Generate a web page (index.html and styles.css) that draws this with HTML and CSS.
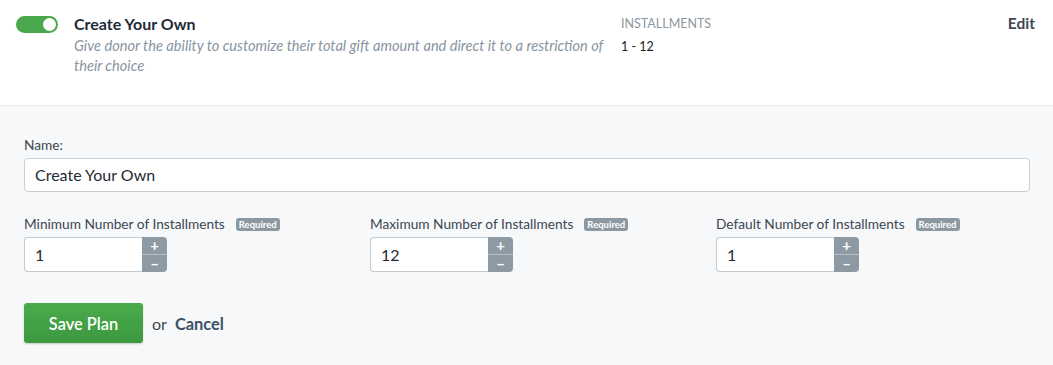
FILE: index.html
```html
<!DOCTYPE html>
<html>
<head>
<meta charset="utf-8">
<link rel="stylesheet" href="styles.css">
</head>
<body>
<div class="plan">
  <div class="summary">
    <div class="toggle"><span class="knob"></span></div>
    <div class="info">
      <div class="title">Create Your Own</div>
      <div class="desc">Give donor the ability to customize their total gift amount and direct it to a restriction of their choice</div>
    </div>
    <div class="meta">
      <div class="meta-label">INSTALLMENTS</div>
      <div class="meta-value">1 - 12</div>
    </div>
    <a class="edit">Edit</a>
  </div>
  <div class="form">
    <label class="lbl">Name:</label>
    <div class="text-input">Create Your Own</div>
    <div class="cols">
      <div class="col">
        <div class="lbl">Minimum Number of Installments <span class="badge">Required</span></div>
        <div class="num">
          <div class="num-field">1</div>
          <div class="spin"><span class="up">+</span><span class="down">–</span></div>
        </div>
      </div>
      <div class="col">
        <div class="lbl">Maximum Number of Installments <span class="badge">Required</span></div>
        <div class="num">
          <div class="num-field">12</div>
          <div class="spin"><span class="up">+</span><span class="down">–</span></div>
        </div>
      </div>
      <div class="col">
        <div class="lbl">Default Number of Installments <span class="badge">Required</span></div>
        <div class="num">
          <div class="num-field">1</div>
          <div class="spin"><span class="up">+</span><span class="down">–</span></div>
        </div>
      </div>
    </div>
    <div class="actions">
      <button class="save">Save Plan</button>
      <span class="or">or</span>
      <a class="cancel">Cancel</a>
    </div>
  </div>
</div>
</body>
</html>
```
FILE: styles.css
```css
* { box-sizing: border-box; }
html, body { margin: 0; padding: 0; background: #f7f8f9; }
body { font-family: Lato, "Open Sans", sans-serif; color: #3b4752; width: 1053px; height: 365px; overflow: hidden; }
.plan { width: 1053px; }
.summary {
  background: #fff;
  height: 106px;
  border-bottom: 1px solid #e7eaec;
  display: flex;
  padding: 15px 18px 0 16px;
}
.toggle {
  width: 42px; height: 17px; border-radius: 9px; background: #4aa84c;
  display: flex; justify-content: flex-end; align-items: center; padding-right: 2px;
  flex: none; margin-top: 1px;
}
.knob { width: 13px; height: 13px; border-radius: 50%; background: #fff; display: block; }
.info { margin-left: 16px; width: 545px; flex: none; }
.title { font-weight: 700; font-size: 16px; color: #1e2b37; line-height: 18px; }
.desc { font-style: italic; font-size: 14.6px; color: #8795a2; line-height: 20px; margin-top: 3px; }
.meta { margin-left: 2px; padding-top: 1px; }
.meta-label { font-size: 12.5px; color: #8c979f; line-height: 16px; }
.meta-value { font-size: 12.5px; color: #1c1c1c; line-height: 16px; margin-top: 7px; }
.edit { margin-left: auto; font-weight: 700; font-size: 15.5px; color: #3c4853; line-height: 17px; }
.form { padding: 31px 23px 0 24px; }
.lbl { display: block; font-size: 13.7px; color: #3b4752; line-height: 16px; }
.text-input {
  margin-top: 5px; height: 34px; background: #fff; border: 1px solid #c8d0d6; border-radius: 4px;
  padding: 0 10px; font-size: 16px; line-height: 32px; color: #1f2a33;
}
.cols { display: grid; grid-template-columns: repeat(3, 1fr); column-gap: 32px; margin-top: 24px; }
.col .lbl { display: flex; align-items: center; }
.badge {
  display: inline-block; background: #8c99a2; color: #fff; font-size: 9.5px; line-height: 13px;
  padding: 0 3px; border-radius: 3px; margin-left: 11px; font-weight: 700;
}
.num { display: flex; margin-top: 5px; height: 35px; width: 143px; }
.num-field {
  width: 118px; background: #fff; border: 1px solid #c3cbd1; border-right: none;
  border-radius: 4px 0 0 4px; padding: 0 10px; font-size: 16px; line-height: 33px; color: #1f2a33;
}
.spin { width: 25px; display: flex; flex-direction: column; border-radius: 0 4px 4px 0; overflow: hidden; background: #8d9aa4; }
.spin span { flex: 1; color: #fff; font-size: 15px; font-weight: 700; display: flex; align-items: center; justify-content: center; line-height: 1; }
.spin .up { border-bottom: 1px solid #b5bec5; }
.actions { display: flex; align-items: center; margin-top: 31px; }
.save {
  width: 119px; height: 40px; border: none; border-radius: 3px;
  background: linear-gradient(#4aab4c, #3c983f); color: #fff;
  font-family: Lato, "Open Sans", sans-serif; font-size: 16.4px; font-weight: 600;
  box-shadow: 0 1px 2px rgba(0,0,0,0.2);
}
.or { margin-left: 9px; font-size: 16px; color: #3c4853; }
.cancel { margin-left: 8px; font-size: 16.4px; font-weight: 700; color: #3d5166; }
```
